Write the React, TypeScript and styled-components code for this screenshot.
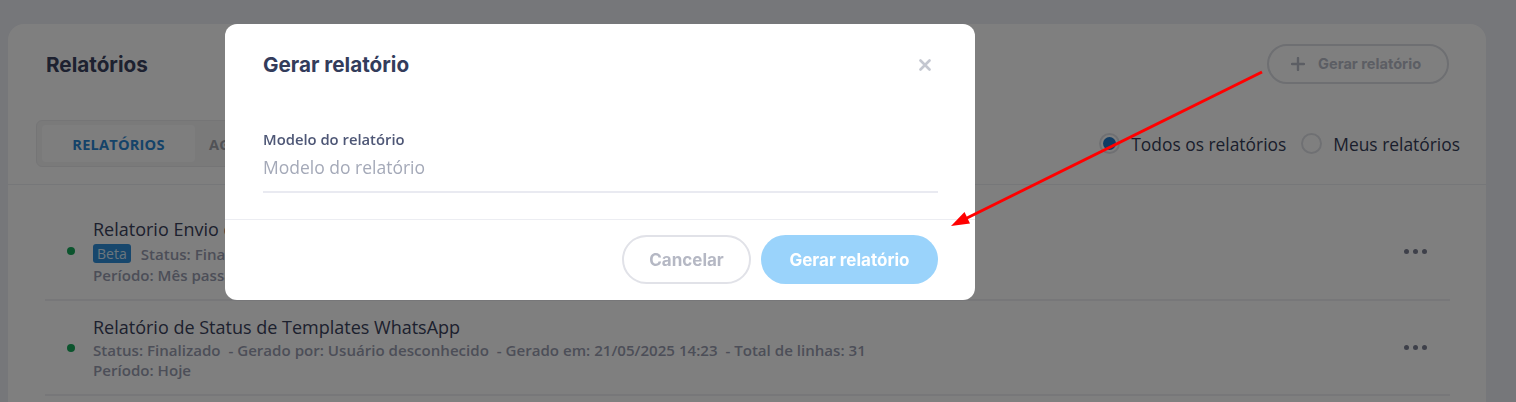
import styled, { createGlobalStyle } from 'styled-components'

const GlobalStyle = createGlobalStyle`
  * { box-sizing: border-box; }
  html, body { margin: 0; padding: 0; height: 100%; overflow: hidden; }
  body {
    font-family: "Open Sans", "Liberation Sans", sans-serif;
    background: #eceef4;
  }
`

const Page = styled.div`
  min-height: 100vh;
  padding: 24px 30px 0 8px;
`

const Card = styled.section`
  background: #ffffff;
  border-radius: 16px;
  min-height: 420px;
`

const CardHeader = styled.header`
  display: flex;
  align-items: center;
  justify-content: space-between;
  padding: 20px 37px 0 38px;
  height: 60px;
`

const PageTitle = styled.h1`
  margin: 0;
  font-family: "Inter", sans-serif;
  font-size: 20.7px;
  font-weight: 700;
  color: #3a4260;
`

const OutlineButton = styled.button`
  display: flex;
  align-items: center;
  gap: 13px;
  height: 40px;
  width: 182px;
  padding: 0 22px;
  border: 2px solid #dcdee4;
  border-radius: 20px;
  background: transparent;
  font-family: "Inter", sans-serif;
  font-size: 14.6px;
  font-weight: 700;
  color: #b9bcc8;
`

const ToolRow = styled.div`
  display: flex;
  align-items: center;
  justify-content: space-between;
  margin-top: 36px;
  padding: 0 26px 17px 28px;
  border-bottom: 1px solid #eceef2;
`

const Tabs = styled.div`
  display: flex;
  height: 47px;
  padding: 4px 5px;
  border: 1px solid #ebebed;
  border-radius: 6px;
  background: #f4f4f5;
`

const Tab = styled.div<{ $active?: boolean }>`
  display: flex;
  align-items: center;
  justify-content: center;
  min-width: 153px;
  padding: 0 14px;
  border-radius: 4px;
  font-size: 14.6px;
  font-weight: 700;
  letter-spacing: 0.2px;
  background: ${p => (p.$active ? '#fcfcfd' : 'transparent')};
  color: ${p => (p.$active ? '#2a86d2' : '#a2a5ad')};
`

const Radios = styled.div`
  display: flex;
  align-items: center;
  gap: 15px;
`

const RadioLabel = styled.label`
  display: flex;
  align-items: center;
  gap: 11px;
  font-size: 17.4px;
  color: #353d58;
`

const RadioCircle = styled.span<{ $checked?: boolean }>`
  width: 21px;
  height: 21px;
  border-radius: 50%;
  border: 2px solid #dfe1e6;
  display: flex;
  align-items: center;
  justify-content: center;
  &::after {
    content: '';
    width: 13px;
    height: 13px;
    border-radius: 50%;
    background: ${p => (p.$checked ? '#1f78c8' : 'transparent')};
  }
`

const List = styled.div`
  padding: 18px 36px 0 37px;
`

const Item = styled.div`
  display: flex;
  align-items: center;
  padding: 14px 23px 14px 22px;
  border-bottom: 2px solid #efeff2;
`

const StatusDot = styled.span`
  width: 8px;
  height: 8px;
  border-radius: 50%;
  background: #17a85a;
  margin-right: 18px;
  flex-shrink: 0;
`

const ItemBody = styled.div`
  flex: 1;
`

const ItemTitle = styled.div`
  font-size: 18px;
  line-height: 25px;
  color: #3a425c;
`

const Meta = styled.div`
  display: flex;
  align-items: center;
  font-size: 15.1px;
  line-height: 20px;
  font-weight: 600;
  color: #999db0;
  white-space: pre;
`

const Badge = styled.span`
  display: inline-flex;
  align-items: center;
  height: 19px;
  margin: 2px 10px 2px 0;
  padding: 0 4px;
  border-radius: 3px;
  background: #2f8fda;
  color: #d9ecfa;
  font-size: 14px;
  font-weight: 400;
`

const Kebab = styled.div`
  display: flex;
  gap: 4px;
  span {
    width: 5px;
    height: 5px;
    border-radius: 50%;
    background: #7c8194;
  }
`

const Overlay = styled.div`
  position: fixed;
  inset: 0;
  background: rgba(0, 0, 0, 0.5);
`

const Modal = styled.div`
  position: fixed;
  left: 225px;
  top: 24px;
  width: 750px;
  background: #ffffff;
  border-radius: 12px;
  display: flex;
  flex-direction: column;
`

const ModalHeader = styled.div`
  display: flex;
  align-items: center;
  justify-content: space-between;
  padding: 28px 44px 0 38px;
`

const ModalTitle = styled.h2`
  margin: 0;
  font-family: "Inter", sans-serif;
  font-size: 20.7px;
  line-height: 26px;
  font-weight: 700;
  color: #333c5b;
`

const CloseButton = styled.button`
  border: 0;
  padding: 0;
  background: none;
  display: flex;
`

const ModalBody = styled.div`
  padding: 51px 37px 26px 38px;
`

const FieldLabel = styled.div`
  font-size: 14.8px;
  line-height: 20px;
  font-weight: 600;
  color: #4e5776;
`

const FieldInput = styled.div`
  margin-top: 4px;
  padding: 2px 0 12px;
  font-size: 17.5px;
  line-height: 24px;
  color: #a4a9b8;
  border-bottom: 2px solid #e9eaf1;
`

const ModalFooter = styled.div`
  display: flex;
  justify-content: flex-end;
  gap: 10px;
  padding: 15px 37px 16px;
  border-top: 1px solid #ecedf2;
`

const PillButton = styled.button<{ $primary?: boolean }>`
  height: 49px;
  border-radius: 25px;
  font-family: "Inter", sans-serif;
  font-size: 17px;
  font-weight: 700;
  padding: 0;
  width: ${p => (p.$primary ? '177px' : '129px')};
  border: ${p => (p.$primary ? '0' : '2px solid #e1e2e8')};
  background: ${p => (p.$primary ? '#9ad3fb' : '#ffffff')};
  color: ${p => (p.$primary ? '#ffffff' : '#b5b8c4')};
`

const Annotation = styled.svg`
  position: fixed;
  inset: 0;
  pointer-events: none;
`

const reports = [
  {
    title: 'Relatorio Envio de Mensagens WhatsApp',
    beta: true,
    meta: 'Status: Finalizado  - Gerado por: Usuário desconhecido  - Gerado em: 21/05/2025 14:25  - Total de linhas: 12',
    period: 'Período: Mês passado',
  },
  {
    title: 'Relatório de Status de Templates WhatsApp',
    beta: false,
    meta: 'Status: Finalizado  - Gerado por: Usuário desconhecido  - Gerado em: 21/05/2025 14:23  - Total de linhas: 31',
    period: 'Período: Hoje',
  },
]

function App() {
  return (
    <>
      <GlobalStyle />
      <Page>
        <Card>
          <CardHeader>
            <PageTitle>Relatórios</PageTitle>
            <OutlineButton>
              <svg width="14" height="14" viewBox="0 0 14 14">
                <path d="M7 1v12M1 7h12" stroke="#b9bcc8" strokeWidth="2.4" strokeLinecap="round" />
              </svg>
              Gerar relatório
            </OutlineButton>
          </CardHeader>
          <ToolRow>
            <Tabs>
              <Tab $active>RELATÓRIOS</Tab>
              <Tab>AGENDAMENTOS</Tab>
            </Tabs>
            <Radios>
              <RadioLabel>
                <RadioCircle $checked />
                Todos os relatórios
              </RadioLabel>
              <RadioLabel>
                <RadioCircle />
                Meus relatórios
              </RadioLabel>
            </Radios>
          </ToolRow>
          <List>
            {reports.map(r => (
              <Item key={r.title}>
                <StatusDot />
                <ItemBody>
                  <ItemTitle>{r.title}</ItemTitle>
                  <Meta>
                    {r.beta && <Badge>Beta</Badge>}
                    {r.meta}
                  </Meta>
                  <Meta>{r.period}</Meta>
                </ItemBody>
                <Kebab>
                  <span />
                  <span />
                  <span />
                </Kebab>
              </Item>
            ))}
          </List>
        </Card>
      </Page>
      <Overlay />
      <Modal>
        <ModalHeader>
          <ModalTitle>Gerar relatório</ModalTitle>
          <CloseButton>
            <svg width="12" height="12" viewBox="0 0 12 12">
              <path d="M1.5 1.5l9 9M10.5 1.5l-9 9" stroke="#c4c7d0" strokeWidth="2.6" strokeLinecap="round" />
            </svg>
          </CloseButton>
        </ModalHeader>
        <ModalBody>
          <FieldLabel>Modelo do relatório</FieldLabel>
          <FieldInput>Modelo do relatório</FieldInput>
        </ModalBody>
        <ModalFooter>
          <PillButton>Cancelar</PillButton>
          <PillButton $primary>Gerar relatório</PillButton>
        </ModalFooter>
      </Modal>
      <Annotation width="1516" height="402" viewBox="0 0 1516 402">
        <line x1="1262" y1="72" x2="966" y2="218.5" stroke="#ff0000" strokeWidth="3" />
        <polygon points="951,226 970,223.5 964.5,212" fill="#ff0000" />
      </Annotation>
    </>
  )
}

export default App
